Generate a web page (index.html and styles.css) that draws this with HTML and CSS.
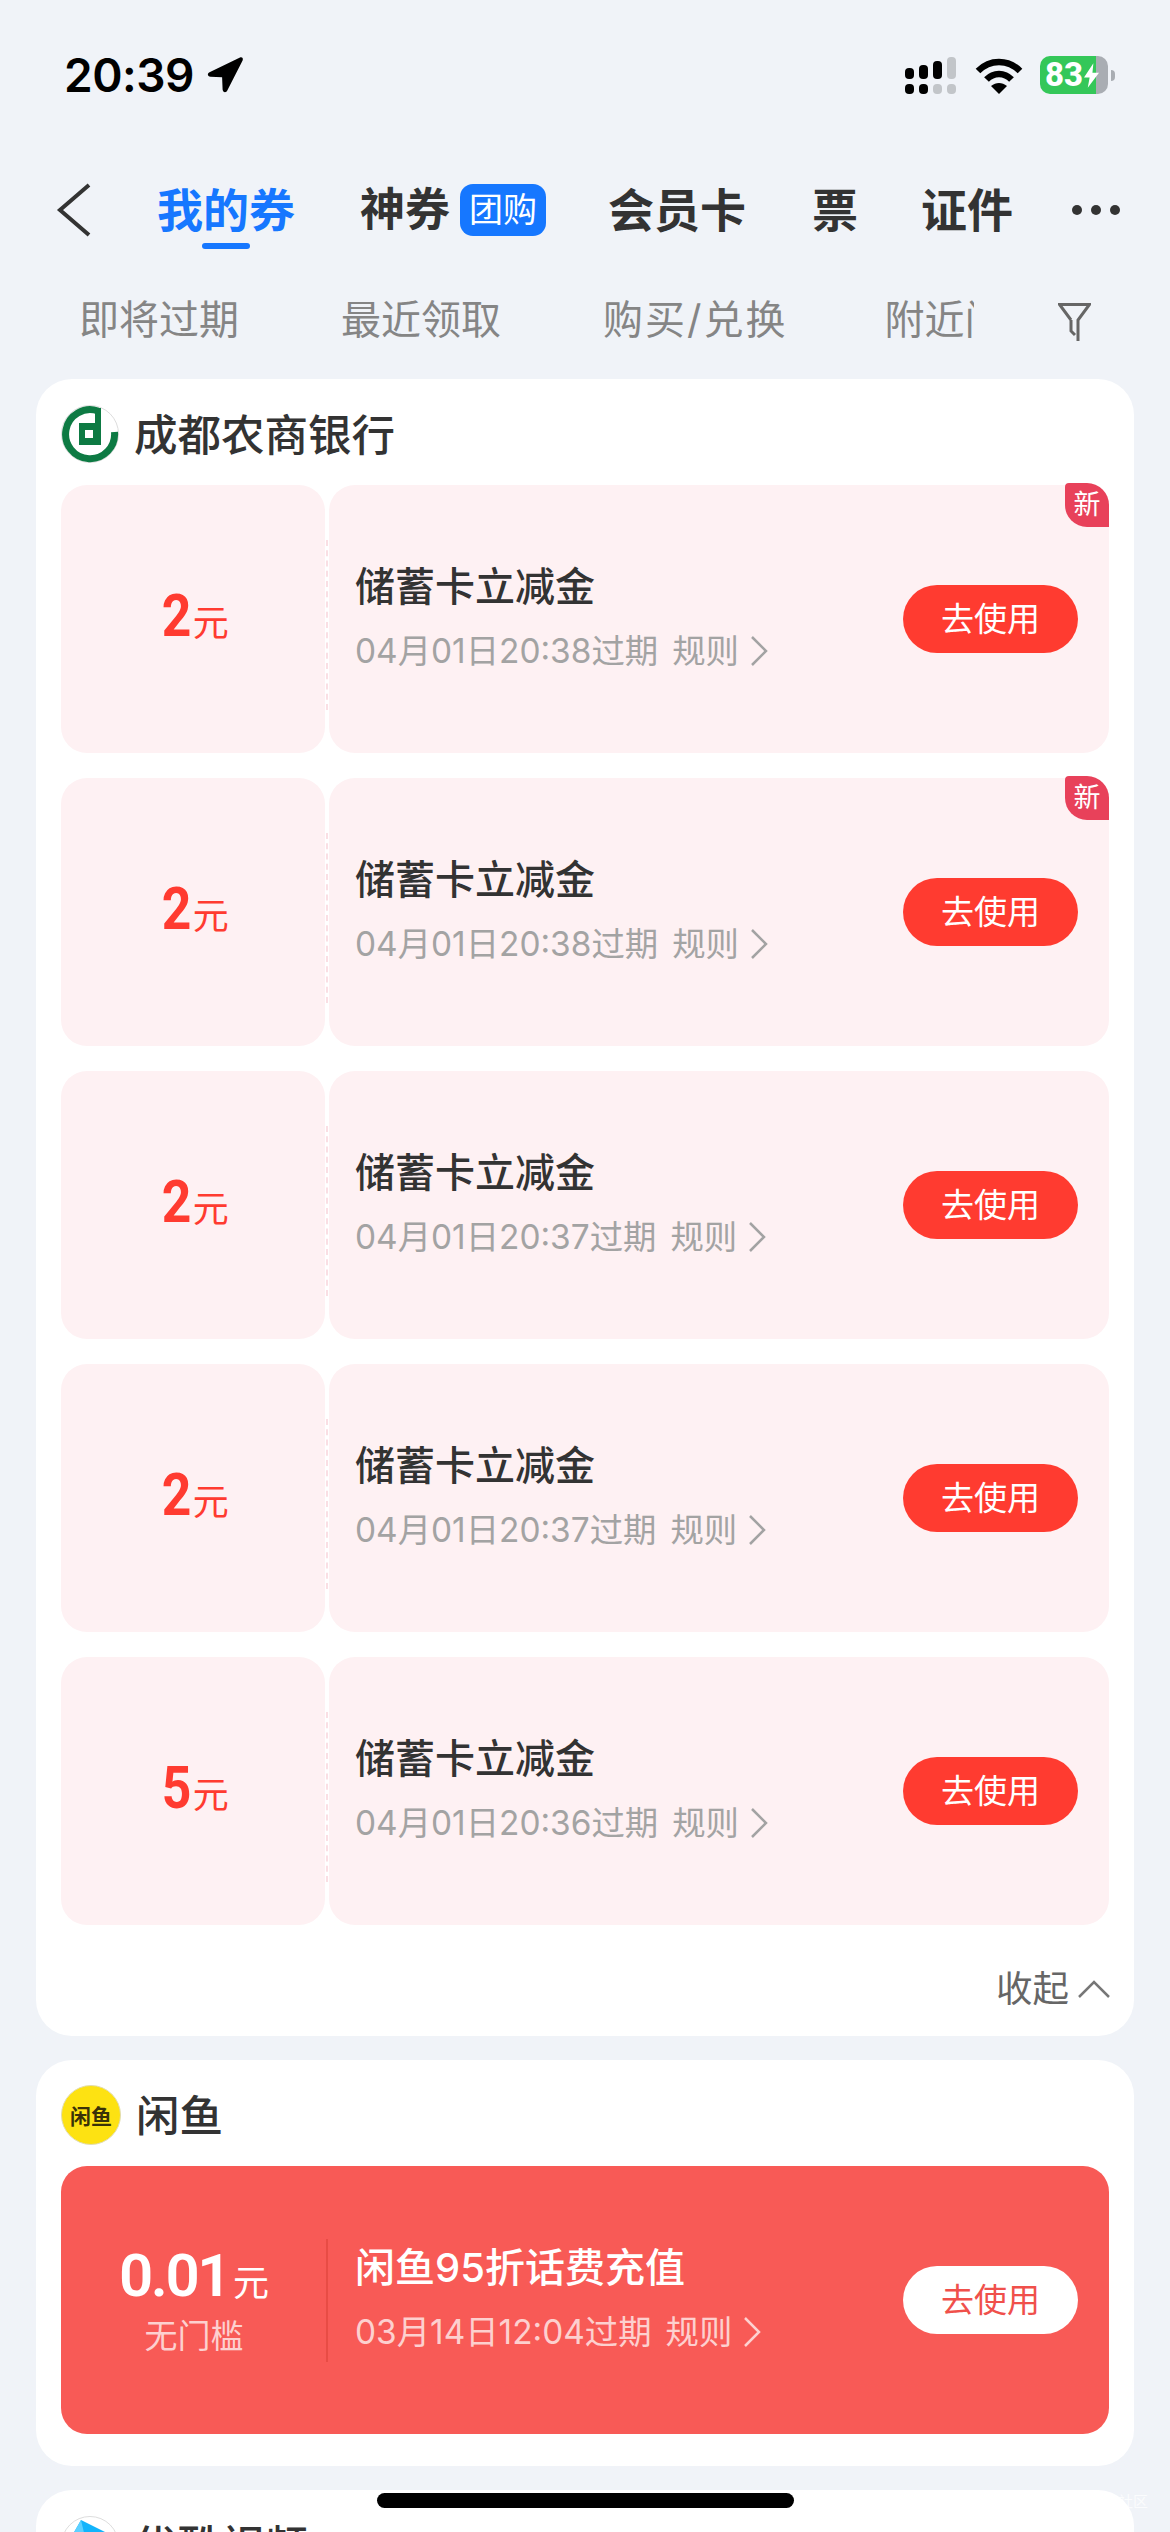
FILE: index.html
```html
<!DOCTYPE html>
<html lang="zh">
<head>
<meta charset="utf-8">
<title>我的券</title>
<link rel="stylesheet" href="styles.css">
</head>
<body>
<div class="page">
  <header class="status">
    <div class="status-left">
      <span class="time">20:39</span>
      <svg class="loc" viewBox="0 0 36 36"><path d="M33 .6 2.5 15.2c-2.6 1.3-2 4.6 1 4.6l11.6.4.5 12.4c.2 3 3.6 3.5 4.7.9L35.600 3.400C36.400 1.200 35 -.3 33 .6z"/></svg>
    </div>
    <div class="status-right">
      <div class="signal">
        <span class="bar b1"></span><span class="bar b2"></span><span class="bar b3"></span><span class="bar b4 off"></span>
        <span class="dot"></span><span class="dot"></span><span class="dot off"></span><span class="dot off"></span>
      </div>
      <svg class="wifi" viewBox="0 0 48 37"><path d="M3 14C15 2 33 2 45 14" fill="none" stroke="#000" stroke-width="6.500"/><path d="M11.500 22.500C18.500 15 29.500 15 36.500 22.500" fill="none" stroke="#000" stroke-width="6.500"/><path d="M16 29c5-4 11-4 16 0l-8 8z"/></svg>
      <div class="battery">
        <span class="batt-num">83</span>
        <svg class="bolt" viewBox="0 0 16 26"><path d="M10 0 0 15h6l-2 11L16 10H9z"/></svg>
      </div>
      <span class="nub"></span>
    </div>
  </header>

  <nav class="tabs">
    <svg class="back" viewBox="0 0 36 56"><path d="M33 3 4 28l29 25" fill="none" stroke="#333" stroke-width="4"/></svg>
    <a class="tab active">我的券</a>
    <a class="tab tab-god">神券</a>
    <span class="tab-badge">团购</span>
    <a class="tab tab-card">会员卡</a>
    <a class="tab tab-ticket">票</a>
    <a class="tab tab-id">证件</a>
    <span class="more"><i></i><i></i><i></i></span>
  </nav>

  <div class="filters">
    <div class="filter-scroll">
      <span class="filter">即将过期</span>
      <span class="filter">最近领取</span>
      <span class="filter filter-wide">购买/兑换</span>
      <span class="filter filter-near">附近门店</span>
    </div>
    <svg class="funnel" viewBox="0 0 33 39"><path d="M13 17 1.500 1.500h30L20 17v21M13 17v11l4 4" fill="none" stroke="#666" stroke-width="3"/></svg>
  </div>

  <main class="list">
    <section class="card">
      <div class="card-head">
        <svg class="logo" viewBox="0 0 58 58"><circle cx="29" cy="29" r="28.500" fill="#fff" stroke="#ddd"/><path d="M37 6A24.500 24.500 0 1 0 53.500 27" fill="none" stroke="#0d7a43" stroke-width="7"/><path fill="#0d7a43" d="M34 3h6v37H18V18h16zM24 25v8h8v-8z" fill-rule="evenodd"/></svg>
        <h2 class="brand">成都农商银行</h2>
      </div>
      <div class="coupons">
        <article class="coupon">
          <div class="stub"><div class="amount"><b>2</b><span>元</span></div></div>
          <div class="main">
            <div class="info"><h3>储蓄卡立减金</h3><p><span>04月01日20:38过期</span><span>规则</span><svg class="chev" viewBox="0 0 18 30"><path d="M2 1l14 14L2 29" fill="none" stroke="currentColor" stroke-width="2.500"/></svg></p></div>
            <button class="use">去使用</button>
          </div>
          <span class="new">新</span>
        </article>
        <article class="coupon">
          <div class="stub"><div class="amount"><b>2</b><span>元</span></div></div>
          <div class="main">
            <div class="info"><h3>储蓄卡立减金</h3><p><span>04月01日20:38过期</span><span>规则</span><svg class="chev" viewBox="0 0 18 30"><path d="M2 1l14 14L2 29" fill="none" stroke="currentColor" stroke-width="2.500"/></svg></p></div>
            <button class="use">去使用</button>
          </div>
          <span class="new">新</span>
        </article>
        <article class="coupon">
          <div class="stub"><div class="amount"><b>2</b><span>元</span></div></div>
          <div class="main">
            <div class="info"><h3>储蓄卡立减金</h3><p><span>04月01日20:37过期</span><span>规则</span><svg class="chev" viewBox="0 0 18 30"><path d="M2 1l14 14L2 29" fill="none" stroke="currentColor" stroke-width="2.500"/></svg></p></div>
            <button class="use">去使用</button>
          </div>
        </article>
        <article class="coupon">
          <div class="stub"><div class="amount"><b>2</b><span>元</span></div></div>
          <div class="main">
            <div class="info"><h3>储蓄卡立减金</h3><p><span>04月01日20:37过期</span><span>规则</span><svg class="chev" viewBox="0 0 18 30"><path d="M2 1l14 14L2 29" fill="none" stroke="currentColor" stroke-width="2.500"/></svg></p></div>
            <button class="use">去使用</button>
          </div>
        </article>
        <article class="coupon">
          <div class="stub"><div class="amount"><b>5</b><span>元</span></div></div>
          <div class="main">
            <div class="info"><h3>储蓄卡立减金</h3><p><span>04月01日20:36过期</span><span>规则</span><svg class="chev" viewBox="0 0 18 30"><path d="M2 1l14 14L2 29" fill="none" stroke="currentColor" stroke-width="2.500"/></svg></p></div>
            <button class="use">去使用</button>
          </div>
        </article>
      </div>
      <div class="collapse"><span>收起</span><svg class="up" viewBox="0 0 32 20"><path d="M1 18 16 3l15 15" fill="none" stroke="#777" stroke-width="2.500"/></svg></div>
    </section>

    <section class="card card-tail">
      <div class="card-head">
        <span class="logo-fish">闲鱼</span>
        <h2 class="brand">闲鱼</h2>
      </div>
      <article class="coupon hot">
        <div class="stub">
          <div class="amount"><b>0.01</b><span>元</span></div>
          <div class="limit">无门槛</div>
        </div>
        <div class="main">
          <div class="info"><h3>闲鱼95折话费充值</h3><p><span>03月14日12:04过期</span><span>规则</span><svg class="chev" viewBox="0 0 18 30"><path d="M2 1l14 14L2 29" fill="none" stroke="currentColor" stroke-width="2.500"/></svg></p></div>
          <button class="use">去使用</button>
        </div>
      </article>
    </section>

    <section class="card">
      <div class="card-head">
        <svg class="logo" viewBox="0 0 58 58"><circle cx="29" cy="29" r="28.500" fill="#fff" stroke="#ddd"/><path fill="#12b4fb" d="M20 4 44 16 50 30 38 54H14L3 34z"/><path fill="#5dd0ff" d="M3 34 20 4 28 38z"/></svg>
        <h2 class="brand">优酷视频</h2>
      </div>
    </section>
  </main>

  <div class="home"></div>
  <div class="mark">社区</div>
</div>
</body>
</html>
```

FILE: styles.css
```css
* { box-sizing: border-box; }
html, body { margin: 0; padding: 0; }
body {
  background: #f0f3f8;
  font-family: Inter, "Noto Sans CJK SC", sans-serif;
  color: #333;
}
.page { position: relative; width: 1170px; height: 2532px; overflow: hidden; background: #f0f3f8; }

/* status bar */
.status { height: 150px; display: flex; justify-content: space-between; align-items: center; padding: 0 55px 0 64px; }
.status-left { display: flex; align-items: center; gap: 13px; }
.time { font-size: 46px; font-weight: 600; color: #000; line-height: 50px; letter-spacing: -.5px; }
.loc { width: 36px; height: 36px; display: block; }
.status-right { display: flex; align-items: center; }
.signal { display: grid; grid-template-columns: repeat(4, 9px); grid-template-rows: 22px 10px; gap: 5px; margin-right: 19px; }
.bar { background: #000; border-radius: 4px; align-self: end; }
.b1 { height: 11px; } .b2 { height: 14px; } .b3 { height: 18px; } .b4 { height: 22px; }
.dot { background: #000; border-radius: 4px; }
.signal .off { background: #c2c5c9; }
.wifi { width: 48px; height: 37px; display: block; margin-right: 17px; }
.battery {
  width: 68px; height: 38px; border-radius: 10px;
  background: linear-gradient(90deg, #34c759 0 82%, #a9adb3 82% 100%);
  display: flex; align-items: center; padding-left: 5px; gap: 0;
}
.batt-num { font-size: 33px; font-weight: 800; color: #fff; line-height: 38px; letter-spacing: 0; font-family: Roboto, sans-serif; }
.bolt { width: 15px; height: 25px; fill: #fff; display: block; margin-left: 1px; }
.nub { width: 4px; height: 11px; background: #a9adb3; border-radius: 0 4px 4px 0; margin-left: 3px; }

/* tabs */
.tabs { height: 120px; display: flex; align-items: center; padding-left: 56px; }
.back { width: 36px; height: 56px; display: block; margin-right: 65px; }
.tab { position: relative; font-size: 46px; line-height: 60px; font-weight: 600; color: #333; white-space: nowrap; }
.tab.active { color: #1677ff; }
.tab.active::after { content: ""; position: absolute; left: 45px; bottom: -9px; width: 48px; height: 6px; border-radius: 3px; background: #1677ff; }
.tab-god { margin-left: 65px; font-size: 45px; }
.tab-badge { margin-left: 10px; width: 86px; height: 52px; line-height: 52px; text-align: center; border-radius: 13px; background: #1677ff; color: #fff; font-size: 34px; }
.tab-card { margin-left: 62px; }
.tab-ticket { margin-left: 66px; }
.tab-id { margin-left: 63px; }
.more { margin-left: 59px; display: flex; gap: 9px; }
.more i { width: 10px; height: 10px; border-radius: 50%; background: #333; display: block; }

/* filters */
.filters { height: 100px; display: flex; align-items: center; padding-left: 79px; }
.filter-scroll { width: 895px; display: flex; gap: 102px; overflow: hidden; }
.filter { font-size: 40px; line-height: 56px; color: #858585; white-space: nowrap; flex: none; }
.filter-wide { letter-spacing: 2px; }
.filter-near { margin-left: -5px; }
.funnel { width: 33px; height: 39px; display: block; margin-left: 84px; margin-top: 5px; }

/* list */
.list { padding: 9px 36px 0; display: flex; flex-direction: column; gap: 24px; }
.card { background: #fff; border-radius: 36px; padding: 0 25px; }
.card-tail { padding-bottom: 32px; }
.card-head { height: 106px; display: flex; align-items: center; gap: 15px; padding-top: 4px; }
.logo { width: 58px; height: 58px; display: block; flex: none; }
.logo-fish {
  width: 60px; height: 60px; border-radius: 50%; background: #fde212; border: 1px solid #e2ddb0;
  display: flex; align-items: center; justify-content: center;
  font-size: 21px; font-weight: 700; color: #3a3208; flex: none;
}
.brand { margin: 0; padding-top: 2px; font-size: 43.5px; line-height: 56px; font-weight: 500; color: #333; }

/* coupons */
.coupons { display: flex; flex-direction: column; gap: 25px; }
.coupon { position: relative; display: flex; height: 268px; gap: 4px; }
.coupon::before { content: ""; position: absolute; left: 265px; top: 55px; height: 170px; border-left: 2px dashed #fadfe4; }
.stub { width: 264px; flex: none; background: #fef1f3; border-radius: 26px; display: flex; flex-direction: column; align-items: center; justify-content: center; }
.main { flex: 1; background: #fef1f3; border-radius: 26px; padding: 0 31px 0 26px; display: flex; align-items: center; justify-content: space-between; }
.amount { display: flex; align-items: baseline; color: #ff3b30; line-height: 60px; }
.amount b { font-family: Roboto, sans-serif; font-size: 60px; font-weight: 700; display: block; transform: scaleX(.86); transform-origin: right center; }
.amount span { font-size: 36px; margin-left: 1px; }
.info { padding-bottom: 3px; }
.info h3 { margin: 0; font-size: 40px; line-height: 48px; font-weight: 500; color: #333; }
.info p { margin: 18px 0 0; display: flex; align-items: center; gap: 14px; font-size: 33.4px; line-height: 44px; color: #a3a3a3; }
.chev { width: 18px; height: 30px; display: block; margin-left: -3px; }
.use {
  width: 175px; height: 68px; border: 0; border-radius: 34px; padding: 0;
  background: #ff3b30; color: #fff; font: 400 33px/68px Inter, "Noto Sans CJK SC", sans-serif;
}
.new {
  position: absolute; top: -2px; right: 0; width: 44px; height: 44px;
  background: #e8415a; color: #fff; font-size: 27px; line-height: 44px; text-align: center;
  border-radius: 4px 22px 0 22px;
}

/* hot coupon */
.hot { background: #f85a56; border-radius: 26px; gap: 0; }
.hot::before { left: 265px; top: 73px; height: 123px; border-left: 2px solid #e84c45; }
.hot .stub { background: none; width: 266px; border-radius: 0; padding-top: 4px; }
.hot .main { background: none; padding-left: 28px; }
.hot .amount { color: #fff; }
.hot .amount b { font-weight: 600; letter-spacing: -2.5px; transform: none; }
.hot .amount span { margin-left: 4px; }
.limit { margin-top: 1px; font-size: 33px; line-height: 44px; color: rgba(255,255,255,.72); }
.hot .info h3 { color: #fff; }
.hot .info p { color: rgba(255,255,255,.72); }
.hot .use { background: #fff; color: #f0504b; }

/* collapse */
.collapse { display: flex; justify-content: flex-end; align-items: center; gap: 9px; padding: 42px 0 25px; margin-right: -1px; font-size: 36.5px; line-height: 44px; color: #666; }
.up { width: 32px; height: 20px; display: block; }

/* overlays */
.home { position: absolute; left: 377px; top: 2493px; width: 417px; height: 15px; border-radius: 8px; background: #000; }
.mark { position: absolute; left: 1118px; top: 2492px; font-size: 15px; line-height: 20px; color: rgba(255,255,255,.75); }
```
